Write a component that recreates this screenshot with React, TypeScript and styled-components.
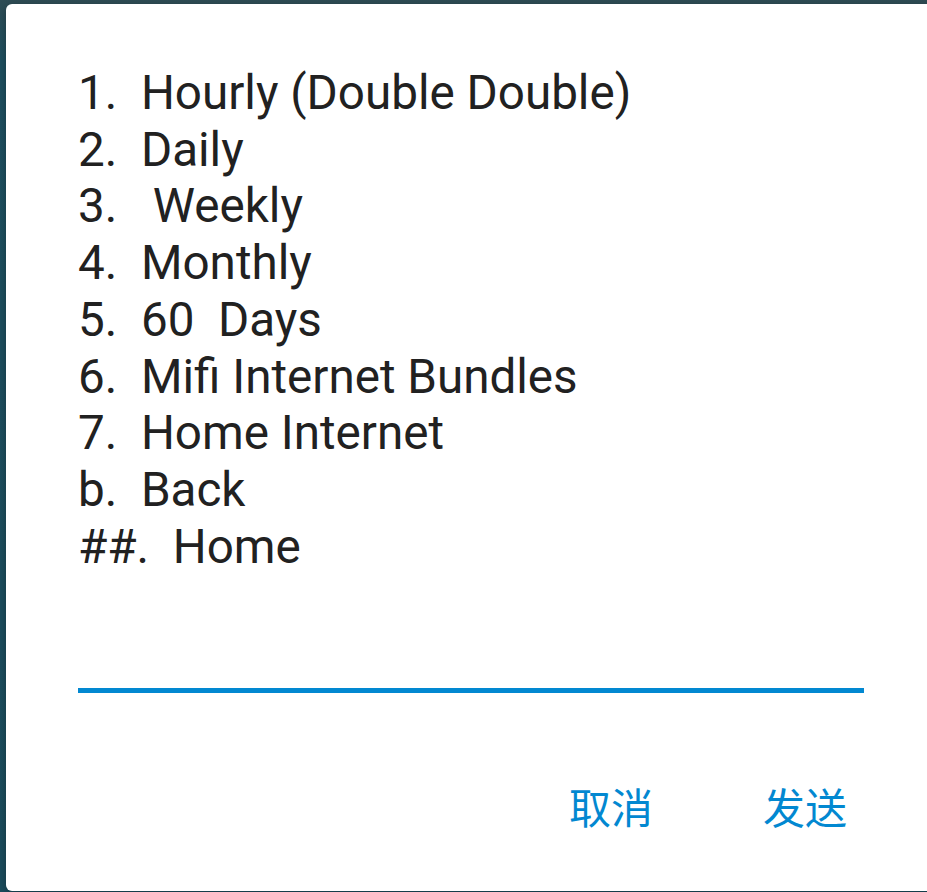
import React from 'react';
import styled, { createGlobalStyle } from 'styled-components';

const GlobalStyle = createGlobalStyle`
  html, body {
    margin: 0;
    padding: 0;
    width: 927px;
    height: 892px;
    overflow: hidden;
    background: #1d4a58;
  }
`;

const Backdrop = styled.div`
  width: 927px;
  height: 892px;
  padding: 4px 0 1px 6px;
  box-sizing: border-box;
  background: linear-gradient(180deg, #2f4d55 0px, #1e4f5f 60px, #1b4c5c 100%);
  overflow: hidden;
`;

const Dialog = styled.div`
  width: 940px;
  height: 887px;
  box-sizing: border-box;
  background: #ffffff;
  border-radius: 6px;
  padding: 61px 0 0 72px;
  display: flex;
  flex-direction: column;
  box-shadow: 0 2px 8px rgba(0, 0, 0, 0.3);
`;

const Message = styled.div`
  font-family: Roboto, 'Noto Sans', sans-serif;
  font-size: 47.6px;
  line-height: 56.7px;
  color: #212121;
  white-space: pre;
`;

const Field = styled.div`
  width: 786px;
  height: 5px;
  margin-top: 113px;
  background: #0288d1;
`;

const Actions = styled.div`
  display: flex;
  justify-content: flex-end;
  width: 769px;
  margin-top: 88px;
`;

const ActionButton = styled.button<{ $gap?: number }>`
  border: none;
  background: none;
  padding: 0;
  margin-left: ${p => p.$gap ?? 0}px;
  font-family: 'Noto Sans CJK SC', 'Noto Sans', sans-serif;
  font-size: 42px;
  line-height: 50px;
  color: #0288d1;
  cursor: pointer;
`;

const lines = [
  '1.  Hourly (Double Double)',
  '2.  Daily',
  '3.   Weekly',
  '4.  Monthly',
  '5.  60  Days',
  '6.  Mifi Internet Bundles',
  '7.  Home Internet',
  'b.  Back',
  '##.  Home',
];

export default function App() {
  return (
    <>
      <GlobalStyle />
      <Backdrop>
        <Dialog>
          <Message>{lines.join('\n')}</Message>
          <Field />
          <Actions>
            <ActionButton>取消</ActionButton>
            <ActionButton $gap={110}>发送</ActionButton>
          </Actions>
        </Dialog>
      </Backdrop>
    </>
  );
}
